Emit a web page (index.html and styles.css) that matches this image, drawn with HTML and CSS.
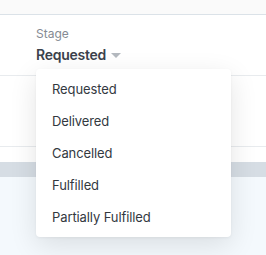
FILE: index.html
```html
<!DOCTYPE html>
<html lang="en">
<head>
  <meta charset="UTF-8">
  <title>Stage</title>
  <link rel="stylesheet" href="styles.css">
</head>
<body>

  <div class="topbar"></div>

  <div class="form">
    <div class="row row-field">
      <div class="field">
        <div class="label">Stage</div>
        <div class="select">
          Requested
          <svg class="caret" width="10" height="6" viewBox="0 0 10 6"><path d="M0 0h10L5 5z" fill="#b4b9bf"/></svg>
        </div>

        <!-- open dropdown -->
        <ul class="menu">
          <li>Requested</li>
          <li>Delivered</li>
          <li>Cancelled</li>
          <li>Fulfilled</li>
          <li>Partially Fulfilled</li>
        </ul>
      </div>
    </div>
    <div class="row row-empty"></div>
    <div class="spacer"></div>
  </div>

  <div class="section-head"></div>
  <div class="section-body"></div>

</body>
</html>
```

FILE: styles.css
```css
body {
  margin: 0;
  font-family: Inter, "Noto Sans", sans-serif;
  background-color: #f4f9fd;
  height: 255px;
  overflow: hidden;
}

.topbar {
  height: 14px;
  background-color: #fafafa;
  border-bottom: 1px solid #dbe2e8;
}

.form {
  background-color: #ffffff;
}

.row {
  border-bottom: 1px solid #e8ebee;
}
.row-field {
  height: 60px;
}
.row-empty {
  height: 70px;
}
.spacer {
  height: 15px;
}

.field {
  position: relative;
  margin-left: 36px;
  padding-top: 11px;
  width: 195px;
}

.label {
  font-size: 12px;
  line-height: 16px;
  color: #858b93;
}

.select {
  margin-top: 3px;
  font-size: 14px;
  line-height: 20px;
  font-weight: 600;
  letter-spacing: -0.25px;
  color: #3b424c;
  display: flex;
  align-items: center;
  gap: 5px;
}
.caret {
  margin-top: 1px;
}

/* Dropdown list */
.menu {
  position: absolute;
  top: calc(100% + 4px);
  left: 0;
  width: 195px;
  margin: 0;
  padding: 4px 0;
  list-style: none;
  background-color: #ffffff;
  border-radius: 4px;
  box-shadow: 0 8px 28px rgba(0, 0, 0, 0.11), 0 1px 3px rgba(0, 0, 0, 0.05);
  z-index: 10;
}
.menu li {
  height: 32px;
  line-height: 32px;
  padding: 0 16px;
  font-size: 13px;
  letter-spacing: -0.1px;
  color: #33393f;
}

.section-head {
  height: 15px;
  background-color: #d6dde4;
}
.section-body {
  height: 80px;
  background-color: #f4f9fd;
}
```
